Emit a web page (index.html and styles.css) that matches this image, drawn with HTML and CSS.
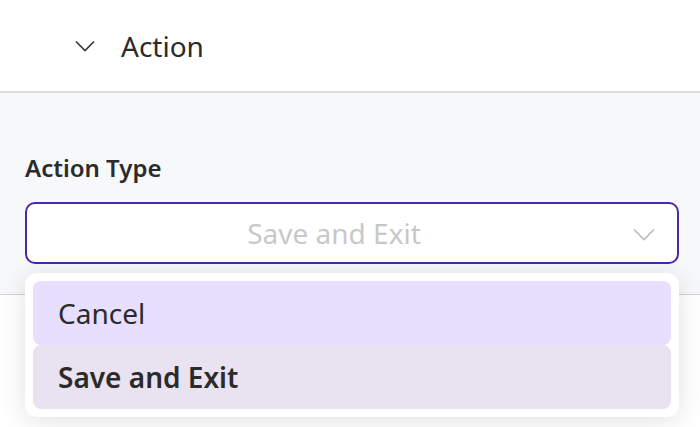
FILE: index.html
```html
<!DOCTYPE html>
<html lang="en">
<head>
  <meta charset="UTF-8">
  <meta name="viewport" content="width=device-width, initial-scale=1">
  <title>Action</title>
  <link rel="stylesheet" href="styles.css">
</head>
<body>

  <!-- SECTION HEADER -->
  <div class="section-head">
    <svg class="chev" width="20" height="12" viewBox="0 0 20 12">
      <polyline points="1,1.5 10,10.5 19,1.5" fill="none" stroke="#333" stroke-width="1.6"/>
    </svg>
    <span>Action</span>
  </div>

  <!-- ACTION PANEL -->
  <div class="panel">
    <label class="field-label">Action Type</label>
    <div class="select-wrap">
      <div class="select">
        <span class="placeholder">Save and Exit</span>
        <svg class="select-chev" width="22" height="13" viewBox="0 0 22 13">
          <polyline points="1,1.5 11,11.5 21,1.5" fill="none" stroke="#bdbdbd" stroke-width="1.6"/>
        </svg>
      </div>
      <ul class="menu">
        <li class="option hover">Cancel</li>
        <li class="option selected">Save and Exit</li>
      </ul>
    </div>
  </div>

</body>
</html>
```

FILE: styles.css
```css
html, body { min-height: 100vh; }
body {
  margin: 0;
  font-family: "Noto Sans", "Open Sans", sans-serif;
  color: #2b2b2b;
  background: #fff;
}
.section-head {
  height: 91px;
  display: flex;
  align-items: center;
  padding-left: 75px;
  gap: 26px;
  font-size: 28px;
  border-bottom: 2px solid #dcdcdc;
}
.chev { display: block; }
.panel {
  background: #f7f8fa;
  padding: 59px 21px 30px 25px;
  border-bottom: 1px solid #d2d2d4;
}
.field-label {
  display: block;
  font-size: 24px;
  line-height: 32px;
  font-weight: 600;
  margin-bottom: 18px;
}
.select-wrap { position: relative; }
.select {
  height: 58px;
  border: 2px solid #4a28a8;
  border-radius: 10px;
  background: #fff;
  display: flex;
  align-items: center;
  justify-content: center;
  padding-right: 36px;
  position: relative;
}
.placeholder { font-size: 28px; color: #c8c8c8; }
.select-chev {
  position: absolute;
  right: 22px;
  top: 24px;
}
.menu {
  position: absolute;
  top: 71px;
  left: 0;
  right: 0;
  margin: 0;
  padding: 8px;
  list-style: none;
  background: #fff;
  border-radius: 12px;
  box-shadow: 0 4px 28px rgba(0,0,0,0.12);
}
.option {
  height: 64px;
  display: flex;
  align-items: center;
  padding-left: 25px;
  font-size: 28px;
  border-radius: 8px;
}
.option.hover { background: #e8defe; }
.option.selected { background: #e8e2f1; font-weight: 600; }
```
